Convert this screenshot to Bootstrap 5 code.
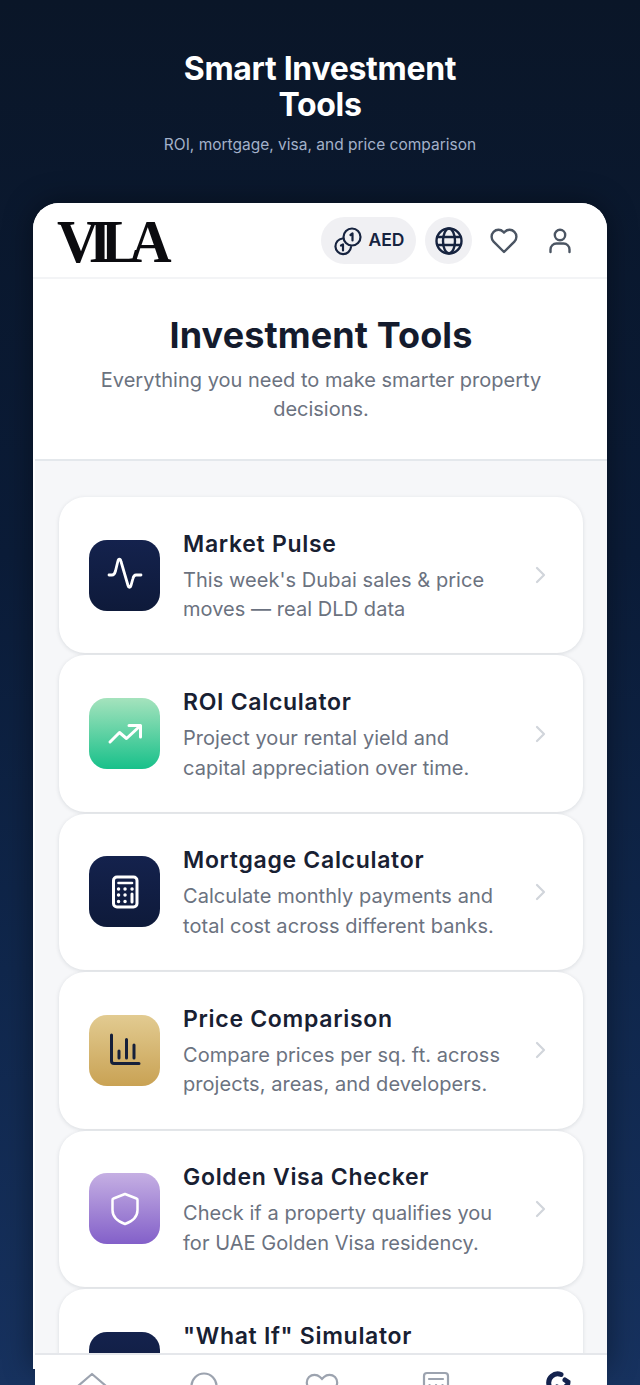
<!DOCTYPE html>
<html lang="en">
<head>
    <meta charset="UTF-8">
    <meta name="viewport" content="width=device-width, initial-scale=1.0">
    <title>Smart Investment Tools</title>
    <link href="https://cdn.jsdelivr.net/npm/bootstrap@5.3.0/dist/css/bootstrap.min.css" rel="stylesheet">
    <style>
        html, body { height: 1385px; overflow: hidden; }
        body {
            font-family: Inter, "Noto Sans", sans-serif;
            background: linear-gradient(180deg, #0a1628 0%, #0b1c38 40%, #10274c 70%, #17325f 100%);
        }
        .hero { padding: 51px 0 0; height: 203px; }
        .hero-title { font-size: 32px; line-height: 36px; font-weight: 700; letter-spacing: -.3px; color: #fff; margin: 0; }
        .hero-sub { font-size: 15.5px; line-height: 24px; color: #a3b1c9; margin: 10px 0 0; }
        .phone { position: relative; width: 574px; margin-left: 33px; }
        .phone-screen {
            height: 1166px;
            background: #fff;
            border-radius: 26px 26px 0 0;
            box-shadow: 0 0 30px rgba(0, 0, 0, .4);
            overflow: hidden;
        }
        .top-bar { height: 76px; padding: 1px 35px 0 24px; background: #fff; border-bottom: 2px solid #f3f4f6; }
        .logo-word {
            font-family: "Liberation Serif", serif;
            font-weight: 700;
            font-size: 62px;
            line-height: 1;
            letter-spacing: -11px;
            color: #0b0b0f;
            transform: scaleX(.94);
            transform-origin: left center;
        }
        .aed-pill { height: 47px; width: 95px; border-radius: 24px; background: #f0f0f3; color: #16233f; font-size: 17.5px; font-weight: 600; margin-right: 9px; gap: 6px; }
        .globe-btn { width: 47px; height: 47px; border-radius: 50%; background: #f0f0f3; margin-right: 17px; }
        .heart-btn { margin-right: 29px; }
        .screen-body { margin-left: 2px; height: 1090px; background: #f6f7f9; }
        .intro { height: 182px; padding: 34px 40px 0; background: #fff; border-bottom: 2px solid #e4e8ec; }
        .intro-title { font-size: 36px; line-height: 44px; font-weight: 700; letter-spacing: .1px; color: #141b2d; margin: 0; }
        .intro-sub { font-size: 20px; line-height: 29px; color: #6b7280; margin: 9px 0 0; }
        .tool-list { padding: 36px 24px 0; gap: 2px; }
        .tool-row {
            height: 156.4px;
            flex-shrink: 0;
            padding: 0 37px 0 30px;
            background: #fff;
            border-radius: 26px;
            box-shadow: 0 1px 4px rgba(20, 30, 50, .12);
        }
        .tool-icon { width: 71px; height: 71px; border-radius: 18px; margin-right: 23px; flex-shrink: 0; }
        .ic-navy { background: linear-gradient(180deg, #14224d, #0e1a3a); }
        .ic-green { background: linear-gradient(180deg, #a5e3bd, #18c08a); }
        .ic-gold { background: linear-gradient(180deg, #e2cb91, #c9a254); }
        .ic-purple { background: linear-gradient(180deg, #c5afe3, #8360c9); }
        .tool-name { font-size: 23px; line-height: 30px; font-weight: 600; letter-spacing: .7px; color: #182032; margin: 0 0 7px; }
        .tool-desc { font-size: 20px; line-height: 29.5px; letter-spacing: .05px; color: #6b7280; margin: 0; min-height: 59px; }
        .tool-text { width: 326px; padding-top: 3px; }
        .tool-chevron { margin-left: auto; }
        .bottom-nav {
            position: absolute;
            left: 2px;
            right: 0;
            top: 1150px;
            height: 60px;
            padding: 16px 0 0 40px;
            background: #fff;
            border-top: 2px solid #e5e7eb;
        }
        .bottom-nav svg { flex-shrink: 0; }
        .bottom-nav svg + svg { margin-left: 80px; }
        .bottom-nav svg:nth-child(3) { margin-left: 82px; }
        .bottom-nav svg:last-child { margin-left: 86px; }
    </style>
</head>
<body>
    <header class="hero text-center">
        <h1 class="hero-title">Smart Investment<br>Tools</h1>
        <p class="hero-sub">ROI, mortgage, visa, and price comparison</p>
    </header>

    <div class="phone">
        <div class="phone-screen">
            <div class="top-bar d-flex align-items-center">
                <span class="logo-word">VILA</span>
                <div class="ms-auto d-flex align-items-center">
                    <div class="aed-pill d-flex align-items-center justify-content-center">
                        <svg width="30" height="30" viewBox="0 0 30 30" fill="none" stroke="#16233f" stroke-width="2.2" stroke-linecap="round" stroke-linejoin="round">
                            <circle cx="19" cy="11" r="8.5"/>
                            <path d="M9.5 12.5a7.8 7.8 0 1 0 8.5 8.5"/>
                            <path d="M17.5 9l2-1.5v7"/>
                            <path d="M8 19.5l2-1v6"/>
                        </svg>
                        <span>AED</span>
                    </div>
                    <div class="globe-btn d-flex align-items-center justify-content-center">
                        <svg width="30" height="30" viewBox="0 0 30 30" fill="none" stroke="#16233f" stroke-width="2.4">
                            <circle cx="15" cy="15" r="12.5"/>
                            <ellipse cx="15" cy="15" rx="6" ry="12.5"/>
                            <path d="M3 11h24M3 19h24"/>
                        </svg>
                    </div>
                    <svg class="heart-btn" width="30" height="30" viewBox="0 0 30 30" fill="none" stroke="#4b5563" stroke-width="2.4" stroke-linejoin="round">
                        <path d="M15 26L4.6 15.6a7 7 0 0 1 0-9.8 6.8 6.8 0 0 1 9.7 0l.7.8.7-.8a6.8 6.8 0 0 1 9.7 0 7 7 0 0 1 0 9.8z"/>
                    </svg>
                    <svg width="24" height="30" viewBox="0 0 24 30" fill="none" stroke="#4b5563" stroke-width="2.4" stroke-linecap="round">
                        <circle cx="12" cy="9" r="5.2"/>
                        <path d="M2.5 26v-2.500a6 6 0 0 1 6-6h7a6 6 0 0 1 6 6V26"/>
                    </svg>
                </div>
            </div>

            <div class="screen-body">
                <div class="intro text-center">
                    <h2 class="intro-title">Investment Tools</h2>
                    <p class="intro-sub">Everything you need to make smarter property decisions.</p>
                </div>

                <div class="tool-list d-flex flex-column">
                    <div class="tool-row d-flex align-items-center">
                        <div class="tool-icon ic-navy d-flex align-items-center justify-content-center">
                            <svg width="36" height="36" viewBox="0 0 36 36" fill="none" stroke="#fff" stroke-width="2.8" stroke-linecap="round" stroke-linejoin="round">
                                <path d="M2 18h3c2.200 0 2.800-1.500 3.500-4l2.300-9.500c.8-3 2.400-3 3.200 0l7 24c.7 2.600 2.200 2.600 3 0l1.800-6.500c.6-2.400 1.200-4 3.200-4H34"/>
                            </svg>
                        </div>
                        <div class="tool-text">
                            <h3 class="tool-name">Market Pulse</h3>
                            <p class="tool-desc">This week's Dubai sales &amp; price moves — real DLD data</p>
                        </div>
                        <svg class="tool-chevron" width="12" height="18" viewBox="0 0 12 18" fill="none" stroke="#d1d5db" stroke-width="2.2" stroke-linecap="round" stroke-linejoin="round"><path d="M3 2l7 7-7 7"/></svg>
                    </div>

                    <div class="tool-row d-flex align-items-center">
                        <div class="tool-icon ic-green d-flex align-items-center justify-content-center">
                            <svg width="36" height="36" viewBox="0 0 36 36" fill="none" stroke="#fff" stroke-width="3" stroke-linecap="round" stroke-linejoin="round">
                                <path d="M3 26l9.500-9.500 7 6L33 10"/>
                                <path d="M22 9.500h11.500V21"/>
                            </svg>
                        </div>
                        <div class="tool-text">
                            <h3 class="tool-name">ROI Calculator</h3>
                            <p class="tool-desc">Project your rental yield and capital appreciation over time.</p>
                        </div>
                        <svg class="tool-chevron" width="12" height="18" viewBox="0 0 12 18" fill="none" stroke="#d1d5db" stroke-width="2.2" stroke-linecap="round" stroke-linejoin="round"><path d="M3 2l7 7-7 7"/></svg>
                    </div>

                    <div class="tool-row d-flex align-items-center">
                        <div class="tool-icon ic-navy d-flex align-items-center justify-content-center">
                            <svg width="36" height="36" viewBox="0 0 36 36" fill="none" stroke="#fff" stroke-width="3" stroke-linecap="round">
                                <rect x="6.500" y="3" width="23.500" height="30" rx="3.500"/>
                                <path d="M11.500 9h13.500" stroke-width="2.600"/>
                                <path d="M25 20v8" stroke-width="3"/>
                                <path d="M11.500 15h.1M18 15h.1M25 15h.1M11.500 21h.1M18 21h.1M11.500 27.500h.1M18 27.500h.1" stroke-width="3.400"/>
                            </svg>
                        </div>
                        <div class="tool-text">
                            <h3 class="tool-name">Mortgage Calculator</h3>
                            <p class="tool-desc">Calculate monthly payments and total cost across different banks.</p>
                        </div>
                        <svg class="tool-chevron" width="12" height="18" viewBox="0 0 12 18" fill="none" stroke="#d1d5db" stroke-width="2.2" stroke-linecap="round" stroke-linejoin="round"><path d="M3 2l7 7-7 7"/></svg>
                    </div>

                    <div class="tool-row d-flex align-items-center">
                        <div class="tool-icon ic-gold d-flex align-items-center justify-content-center">
                            <svg width="36" height="36" viewBox="0 0 36 36" fill="none" stroke="#16203a" stroke-width="3" stroke-linecap="round" stroke-linejoin="round">
                                <path d="M4.500 3v26a2.500 2.500 0 0 0 2.500 2.500h25"/>
                                <path d="M12 19v7M19.500 7.500V26M27 13v13"/>
                            </svg>
                        </div>
                        <div class="tool-text">
                            <h3 class="tool-name">Price Comparison</h3>
                            <p class="tool-desc">Compare prices per sq. ft. across projects, areas, and developers.</p>
                        </div>
                        <svg class="tool-chevron" width="12" height="18" viewBox="0 0 12 18" fill="none" stroke="#d1d5db" stroke-width="2.2" stroke-linecap="round" stroke-linejoin="round"><path d="M3 2l7 7-7 7"/></svg>
                    </div>

                    <div class="tool-row d-flex align-items-center">
                        <div class="tool-icon ic-purple d-flex align-items-center justify-content-center">
                            <svg width="36" height="36" viewBox="0 0 36 36" fill="none" stroke="#fff" stroke-width="2.500" stroke-linecap="round" stroke-linejoin="round">
                                <path d="M18 3l11.500 4.500a1.500 1.500 0 0 1 1 1.500v10c0 7-5.500 11.500-12.500 14C11 30.500 5.500 26 5.500 19V9a1.500 1.500 0 0 1 1-1.500z"/>
                            </svg>
                        </div>
                        <div class="tool-text">
                            <h3 class="tool-name">Golden Visa Checker</h3>
                            <p class="tool-desc">Check if a property qualifies you for UAE Golden Visa residency.</p>
                        </div>
                        <svg class="tool-chevron" width="12" height="18" viewBox="0 0 12 18" fill="none" stroke="#d1d5db" stroke-width="2.2" stroke-linecap="round" stroke-linejoin="round"><path d="M3 2l7 7-7 7"/></svg>
                    </div>

                    <div class="tool-row d-flex align-items-center">
                        <div class="tool-icon ic-navy"></div>
                        <div class="tool-text">
                            <h3 class="tool-name">"What If" Simulator</h3>
                            <p class="tool-desc"></p>
                        </div>
                    </div>
                </div>
            </div>
        </div>

        <nav class="bottom-nav d-flex align-items-start">
            <svg width="34" height="34" viewBox="0 0 34 34" fill="none" stroke="#9ca3af" stroke-width="2.2" stroke-linejoin="round"><path d="M3 15L17 3l14 12v16H3z"/></svg>
            <svg width="34" height="34" viewBox="0 0 34 34" fill="none" stroke="#9ca3af" stroke-width="2.2"><circle cx="15" cy="15" r="12.500"/></svg>
            <svg width="34" height="34" viewBox="0 0 34 34" fill="none" stroke="#9ca3af" stroke-width="2.2"><path d="M17 30L4 17a8 8 0 0 1 0-11 8 8 0 0 1 11 0l2 2 2-2a8 8 0 0 1 11 0 8 8 0 0 1 0 11z"/></svg>
            <svg width="34" height="34" viewBox="0 0 34 34" fill="none" stroke="#9ca3af" stroke-width="2.2" stroke-linecap="round"><rect x="5" y="2" width="24" height="30" rx="3"/><path d="M10 8h14M10.500 14h.1M17 14h.1M23.500 14h.1"/></svg>
            <svg width="34" height="34" viewBox="0 0 34 34" fill="none" stroke="#14224d" stroke-width="5" stroke-linecap="round"><path d="M22 3.500A9 9 0 0 0 10 14"/><path d="M26 9l3 2c0 5-6 8-11 5"/></svg>
        </nav>
    </div>

    <script src="https://cdn.jsdelivr.net/npm/bootstrap@5.3.0/dist/js/bootstrap.bundle.min.js"></script>
</body>
</html>
